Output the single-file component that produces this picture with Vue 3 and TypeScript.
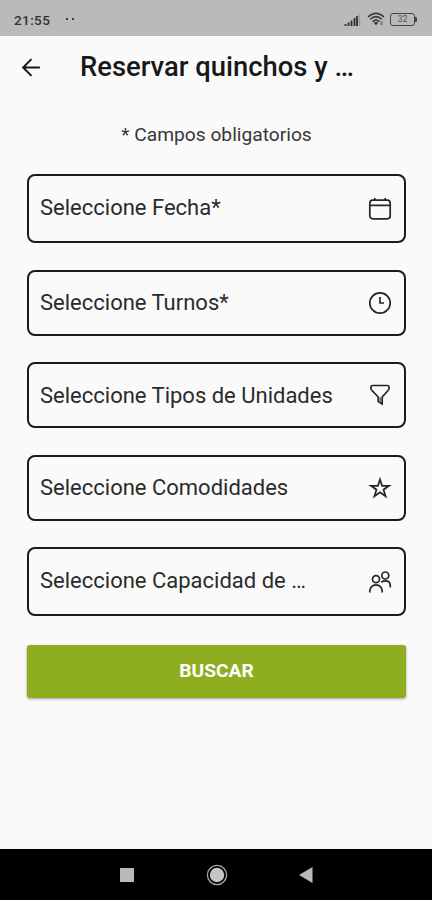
<script setup lang="ts">
type IconName = 'calendar' | 'clock' | 'filter' | 'star' | 'people'

interface Field {
  label: string
  icon: IconName
  tall?: boolean
}

const fields: Field[] = [
  { label: 'Seleccione Fecha*', icon: 'calendar', tall: true },
  { label: 'Seleccione Turnos*', icon: 'clock' },
  { label: 'Seleccione Tipos de Unidades', icon: 'filter' },
  { label: 'Seleccione Comodidades', icon: 'star' },
  { label: 'Seleccione Capacidad de …', icon: 'people', tall: true },
]
</script>

<template>
  <div class="screen">
    <div class="status">
      <span class="time">21:55</span>
      <span class="dots"><i></i><i></i></span>
      <svg class="signal" viewBox="0 0 17 12">
        <path d="M1.5 12v-2M4.5 12V8.5M7.5 12V6.5M10.5 12V4M13 12V2" stroke="#303030" stroke-width="1.8" />
        <path d="M15.5 12V1" stroke="#969696" stroke-width="1.4" />
      </svg>
      <svg class="wifi" viewBox="0 0 18 14">
        <g fill="none" stroke="#363636" stroke-width="1.5">
          <path d="M1 5Q9-2.5 17 5" />
          <path d="M3.2 7.3Q9 2 14.8 7.3" />
          <path d="M5.5 9.7Q9 6.5 12.5 9.7" />
        </g>
        <path d="M6.8 10.7Q9 9.2 11.2 10.7L9 13.2z" fill="#303030" />
        <path d="M14.5 9.5v3.5" stroke="#777" stroke-width="2" />
      </svg>
      <span class="battery"><span>32</span></span>
    </div>

    <header class="header">
      <svg class="back" viewBox="0 0 20 20">
        <path d="M10 2 2 10l8 8M2.2 10H18" fill="none" stroke="#161616" stroke-width="1.9" />
      </svg>
      <h1>Reservar quinchos y …</h1>
    </header>

    <main class="form">
      <p class="hint">* Campos obligatorios</p>
      <div class="fields">
        <div v-for="field in fields" :key="field.label" class="field" :class="{ tall: field.tall }">
          <span class="label">{{ field.label }}</span>
          <svg class="icon" viewBox="0 0 24 24">
            <g v-if="field.icon === 'calendar'">
              <rect x="1.8" y="3.2" width="20.4" height="18.6" rx="3" />
              <path d="M2 8.3h20M6.8 1v2M17.2 1v2" />
            </g>
            <g v-else-if="field.icon === 'clock'">
              <circle cx="12" cy="12" r="10.2" />
              <path d="M12 6v6h4" />
            </g>
            <g v-else-if="field.icon === 'filter'">
              <path d="M4.5 2.5h15q1.5 0 1.5 1.500v1.500q0 1-1 2L14.200 14v7L10.200 18.500V14L4 7.500q-1-1-1-2V4q0-1.500 1.500-1.500z" />
              <path d="M10.500 15h3.500M12.200 15v4" stroke="#777" />
            </g>
            <path v-else-if="field.icon === 'star'" d="m12 3.500 2.100 6.300h6.900l-5.500 3.900 2.100 6.500L12 16.200l-5.600 4 2.100-6.500L3 9.800h6.900z" />
            <g v-else>
              <circle cx="8" cy="9.200" r="3.500" />
              <circle cx="17.300" cy="5.500" r="3.500" />
              <path d="M1.800 22.500V21a6 6 0 0 1 12.400 0v1.500M13.200 12.200q2-1.300 4.300-1.300 4.800 0 4.800 5v1.600" />
            </g>
          </svg>
        </div>
      </div>
      <button class="submit" type="button">BUSCAR</button>
    </main>

    <nav class="navbar">
      <svg class="recent" viewBox="0 0 14 14"><path d="M0 0h14v14H0z" fill="#b9b9b9" /></svg>
      <svg class="home" viewBox="0 0 22 22">
        <circle cx="11" cy="11" r="9.6" fill="none" stroke="#a8a8a8" stroke-width="1.3" />
        <circle cx="11" cy="11" r="7.2" fill="#c6c6c6" />
      </svg>
      <svg class="return" viewBox="0 0 14 16"><path d="M0 8 13.5 0v16z" fill="#b9b9b9" /></svg>
    </nav>
  </div>
</template>

<style>
body {
  margin: 0;
}
</style>

<style scoped>
.screen {
  display: flex;
  flex-direction: column;
  width: 432px;
  height: 900px;
  overflow: hidden;
  background: #fafafa;
  color: #1b1b1b;
  font-family: Roboto, "Liberation Sans", sans-serif;
}
.status {
  display: flex;
  align-items: center;
  flex: none;
  box-sizing: border-box;
  height: 36px;
  padding: 3px 15px 0 14px;
  background: #bababa;
}
.time {
  width: 52px;
  color: #303030;
  font-size: 13.5px;
  font-weight: 500;
  letter-spacing: 0.4px;
}
.dots {
  display: flex;
  gap: 4px;
  margin: 0 auto 1px 0;
}
.dots i {
  width: 2px;
  height: 2px;
  border-radius: 0.5px;
  background: #333;
}
.signal {
  width: 17px;
  height: 12px;
  margin-right: 6px;
}
.wifi {
  width: 18px;
  height: 14px;
  margin: 0 5px 1px 0;
}
.battery {
  position: relative;
  box-sizing: border-box;
  width: 25px;
  height: 13px;
  margin: 0 2px 1px 0;
  border: 1.5px solid #444;
  border-radius: 3px;
  color: #555;
  font-size: 9px;
  line-height: 11px;
  text-align: center;
}
.battery::after {
  position: absolute;
  top: 3px;
  right: -3px;
  width: 2px;
  height: 5px;
  border-radius: 0 1px 1px 0;
  background: #444;
  content: "";
}
.header {
  display: flex;
  align-items: center;
  height: 62px;
  padding-left: 21px;
}
.back {
  width: 21px;
  height: 21px;
  margin-right: 38px;
}
h1 {
  margin: 0;
  color: #181818;
  font-size: 27.4px;
  font-weight: 500;
  white-space: nowrap;
}
.form {
  flex: 1;
  padding: 24px 26px 0 27px;
}
.hint {
  margin: 0;
  color: #373737;
  font-size: 19.2px;
  line-height: 26px;
  text-align: center;
}
.fields {
  display: grid;
  gap: 26.5px;
  margin-top: 26px;
}
.field {
  display: flex;
  align-items: center;
  justify-content: space-between;
  box-sizing: border-box;
  height: 66px;
  padding: 0 12px 0 11px;
  border: 2px solid #1b1b1b;
  border-radius: 8px;
}
.field.tall {
  height: 69px;
}
.label {
  color: #2b2b2b;
  font-size: 22px;
  white-space: nowrap;
}
.tall .label {
  margin-bottom: 3px;
}
.icon {
  width: 24px;
  height: 24px;
  fill: none;
  stroke: #242424;
  stroke-width: 1.7;
}
.submit {
  display: block;
  width: 100%;
  height: 53px;
  margin-top: 29px;
  padding: 0 0 2px;
  border: 0;
  border-radius: 3px;
  background: #8fae1f;
  box-shadow: 0 1px 3px rgba(0, 0, 0, 0.35);
  color: #fff;
  font-family: inherit;
  font-size: 19.2px;
  font-weight: 700;
}
.navbar {
  display: flex;
  align-items: center;
  flex: none;
  box-sizing: border-box;
  height: 51px;
  padding-left: 120px;
  background: #000;
}
.recent {
  width: 14px;
  height: 14px;
}
.home {
  width: 22px;
  height: 22px;
  margin: 0 70.5px 0 72px;
}
.return {
  width: 14px;
  height: 16px;
}
</style>
